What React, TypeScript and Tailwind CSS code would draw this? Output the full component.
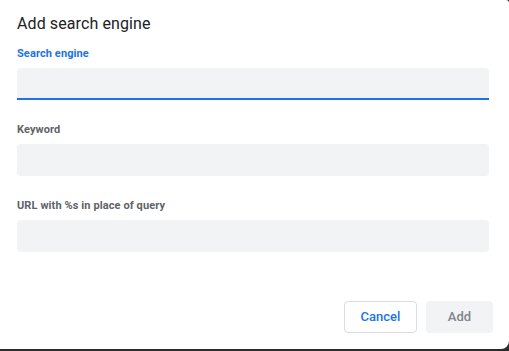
import React from 'react';

const Field = ({ label, active }: { label: string; active?: boolean }) => (
  <div className="flex flex-col">
    <div
      className={`text-[11px] leading-[14px] font-bold tracking-[0.1px] ${
        active ? 'text-[#1a73e8]' : 'text-[#5f6368]'
      }`}
    >
      {label}
    </div>
    <div
      className={`mt-[7px] h-[32px] w-full rounded-t-[4px] bg-[#f1f3f4] ${
        active ? 'border-b-2 border-[#1a73e8]' : 'rounded-b-[4px]'
      }`}
    />
  </div>
);

const App: React.FC = () => {
  return (
    <div className="w-[509px] h-[351px] bg-[#2b2b2b]" style={{ fontFamily: 'Roboto, "Liberation Sans", sans-serif' }}>
      <div className="flex h-[349px] w-full flex-col rounded-tr-[3px] rounded-br-[8px] bg-white pl-[17px] pr-[20px] pt-[14px] pb-[16px]">
        <h2 className="text-[16px] leading-[20px] text-[#202124] tracking-[0.1px]">Add search engine</h2>

        <div className="mt-[13px] flex flex-col gap-[23px]">
          <Field label="Search engine" active />
          <Field label="Keyword" />
          <Field label="URL with %s in place of query" />
        </div>

        <div className="mt-auto -mr-[4px] flex justify-end gap-[9px]">
          <button className="h-[32px] w-[73px] rounded-[4px] border border-[#dadce0] bg-white text-[13px] font-medium text-[#1a73e8]">
            Cancel
          </button>
          <button className="h-[32px] w-[67px] rounded-[4px] bg-[#f1f3f4] text-[13px] font-medium text-[#80868b]">
            Add
          </button>
        </div>
      </div>
    </div>
  );
};

export default App;
